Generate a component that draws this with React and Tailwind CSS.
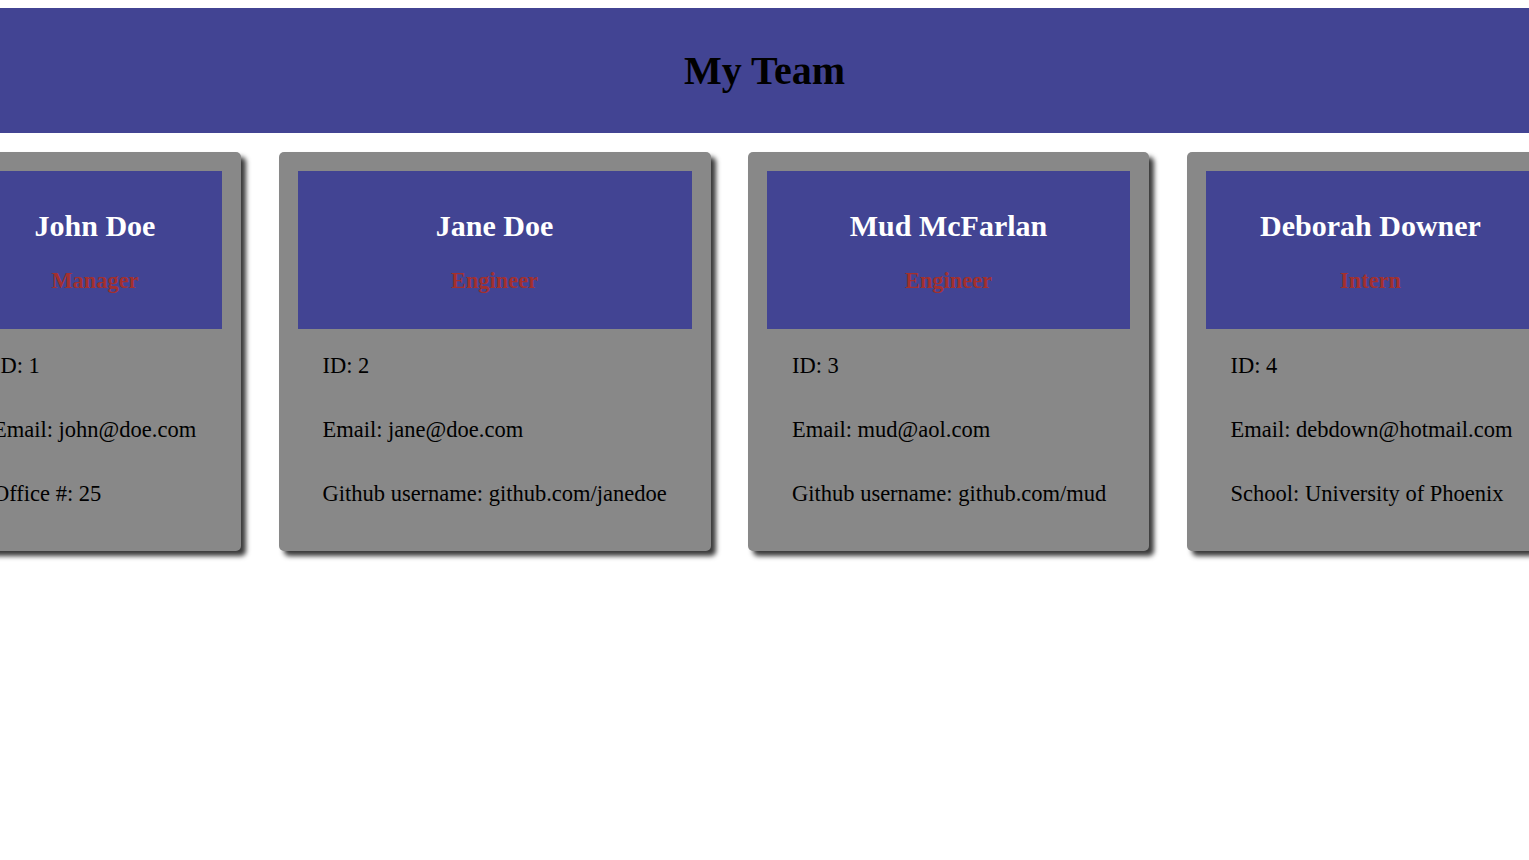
import React from "react";

const team = [
  { w: "w-[292px]", name: "John Doe", role: "Manager", lines: ["ID: 1", "Email: john@doe.com", "Office #: 25"] },
  { w: "w-[432px]", name: "Jane Doe", role: "Engineer", lines: ["ID: 2", "Email: jane@doe.com", "Github username: github.com/janedoe"] },
  { w: "w-[401px]", name: "Mud McFarlan", role: "Engineer", lines: ["ID: 3", "Email: mud@aol.com", "Github username: github.com/mud"] },
  { w: "w-[368px]", name: "Deborah Downer", role: "Intern", lines: ["ID: 4", "Email: debdown@hotmail.com", "School: University of Phoenix"] },
];

function Card({ m }) {
  return (
    <div className={`${m.w} shrink-0 rounded-[5px] bg-[#888888] p-[19px] shadow-[5px_5px_5px_#3a3a3a]`}>
      <div className="flex h-[158px] flex-col items-center bg-[#424493] text-center">
        <div className="mt-[36px] whitespace-nowrap text-[30px] font-bold leading-[38px] text-white">{m.name}</div>
        <div className="mt-[22px] text-[22.4px] font-bold leading-[28px] text-[#a3302e]">{m.role}</div>
      </div>
      <div className="pb-[6px] pl-[25px] pt-[5px]">
        {m.lines.map((l) => (
          <div key={l} className="whitespace-nowrap text-[22.5px] leading-[64px] text-black">
            {l}
          </div>
        ))}
      </div>
    </div>
  );
}

export default function App() {
  return (
    <div className="min-h-[860px] overflow-hidden bg-white font-['Liberation_Serif','Times_New_Roman',serif]">
      <div className="mt-[8px] flex h-[125px] items-center justify-center bg-[#424493]">
        <h1 className="text-[40px] font-bold text-black">My Team</h1>
      </div>
      <div className="mt-[19px] ml-[-51px] flex gap-[37.5px]">
        {team.map((m) => (
          <Card key={m.name} m={m} />
        ))}
      </div>
    </div>
  );
}
